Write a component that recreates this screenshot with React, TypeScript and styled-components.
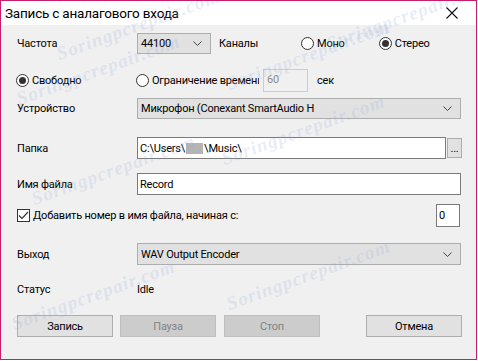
import React from 'react';
import styled, { createGlobalStyle } from 'styled-components';

const GlobalStyle = createGlobalStyle`
  html, body {
    margin: 0;
    padding: 0;
    background: #ffffff;
  }
  body {
    font-family: Roboto, "Liberation Sans", sans-serif;
    font-size: 11px;
    letter-spacing: -0.2px;
    color: #000;
  }
`

const Window = styled.div`
  position: relative;
  width: 477px;
  height: 360px;
  box-sizing: border-box;
  border: 1px solid #c81d6b;
  background: #f0f0f0;
  display: flex;
  flex-direction: column;
  overflow: hidden;
`

const TitleBar = styled.div`
  height: 24px;
  background: #ffffff;
  display: flex;
  align-items: center;
  justify-content: space-between;
  padding-left: 4px;
  font-size: 13.5px;
`

const CloseButton = styled.div`
  width: 30px;
  height: 24px;
  display: flex;
  align-items: center;
  justify-content: center;
  margin-right: 9px;
`

const Body = styled.div`
  padding: 8px 0 0 15px;
  display: flex;
  flex-direction: column;
`

const Row = styled.div<{ $top: number; $h: number }>`
  display: flex;
  align-items: center;
  margin-top: ${p => p.$top}px;
  height: ${p => p.$h}px;
`

const Label = styled.div<{ $w?: number; $ml?: number }>`
  width: ${p => (p.$w ? `${p.$w}px` : 'auto')};
  margin-left: ${p => p.$ml || 0}px;
  white-space: nowrap;
  overflow: hidden;
  flex-shrink: 0;
`

const Combo = styled.div<{ $w: number }>`
  width: ${p => p.$w}px;
  height: 100%;
  box-sizing: border-box;
  background: #e1e1e1;
  border: 1px solid #adadad;
  display: flex;
  align-items: center;
  justify-content: space-between;
  padding: 0 8px 0 3px;
  flex-shrink: 0;
`

const TextBox = styled.div<{ $w: number; $ml?: number; $disabled?: boolean }>`
  width: ${p => p.$w}px;
  margin-left: ${p => p.$ml || 0}px;
  height: 100%;
  box-sizing: border-box;
  background: ${p => (p.$disabled ? '#f0f0f0' : '#ffffff')};
  color: ${p => (p.$disabled ? '#8a8a8a' : '#000')};
  border: 1px solid ${p => (p.$disabled ? '#cccccc' : '#7a7a7a')};
  display: flex;
  align-items: ${p => (p.$disabled ? 'flex-start' : 'center')};
  padding: ${p => (p.$disabled ? '3px 3px 0' : '0 2px')};
  white-space: nowrap;
  overflow: hidden;
  flex-shrink: 0;
`

const Blur = styled.span`
  display: inline-block;
  width: 17px;
  height: 11px;
  margin: 0 1px;
  background: #b4b4b4;
  filter: blur(0.6px);
`

const BrowseButton = styled.div`
  width: 15px;
  height: 20px;
  box-sizing: border-box;
  margin-left: 1px;
  background: #e1e1e1;
  border: 1px solid #adadad;
  font-size: 11px;
  display: flex;
  align-items: flex-end;
  justify-content: center;
  padding-bottom: 3px;
  line-height: 1;
`

const Choice = styled.div<{ $ml?: number; $w?: number }>`
  display: flex;
  align-items: center;
  gap: 3px;
  margin-left: ${p => p.$ml || 0}px;
  width: ${p => (p.$w ? `${p.$w}px` : 'auto')};
  white-space: nowrap;
  overflow: hidden;
  flex-shrink: 0;
`

const RadioCircle = styled.span<{ $on?: boolean }>`
  width: 13px;
  height: 13px;
  box-sizing: border-box;
  border-radius: 50%;
  border: 1px solid #333333;
  background: #ffffff;
  display: flex;
  align-items: center;
  justify-content: center;
  flex-shrink: 0;
  &::after {
    content: '';
    display: ${p => (p.$on ? 'block' : 'none')};
    width: 7px;
    height: 7px;
    border-radius: 50%;
    background: #333333;
  }
`

const CheckBox = styled.span`
  width: 13px;
  height: 13px;
  box-sizing: border-box;
  border: 1px solid #333333;
  background: #ffffff;
  display: flex;
  align-items: center;
  justify-content: center;
  flex-shrink: 0;
`

const ButtonRow = styled.div`
  display: flex;
  margin-top: 19px;
  height: 22px;
`

const Button = styled.div<{ $disabled?: boolean; $ml?: number }>`
  width: 96px;
  height: 100%;
  box-sizing: border-box;
  margin-left: ${p => p.$ml || 0}px;
  background: ${p => (p.$disabled ? '#cccccc' : '#e1e1e1')};
  border: 1px solid ${p => (p.$disabled ? '#bfbfbf' : '#adadad')};
  color: ${p => (p.$disabled ? '#838383' : '#000')};
  display: flex;
  align-items: center;
  justify-content: center;
`

const Watermarks = styled.div`
  position: absolute;
  inset: 0;
  pointer-events: none;
`

const Mark = styled.div`
  position: absolute;
  font-family: "Liberation Serif", serif;
  font-style: italic;
  font-weight: bold;
  font-size: 19px;
  letter-spacing: 1px;
  color: rgba(150, 172, 222, 0.22);
  transform: rotate(-20deg);
  transform-origin: left bottom;
  white-space: nowrap;
`

const Chevron = () => (
  <svg width="9" height="5" viewBox="0 0 9 5">
    <polyline points="0.5,0.5 4.5,4.5 8.5,0.5" fill="none" stroke="#444" strokeWidth="1" />
  </svg>
)

const marks = [
  { x: 60, y: 70 },
  { x: 330, y: 60 },
  { x: 20, y: 115 },
  { x: 230, y: 100 },
  { x: 35, y: 215 },
  { x: 225, y: 175 },
  { x: 15, y: 340 },
  { x: 230, y: 320 },
]

function App() {
  return (
    <>
      <GlobalStyle />
      <Window>
        <TitleBar>
          <span>Запись с аналагового входа</span>
          <CloseButton>
            <svg width="12" height="12" viewBox="0 0 12 12">
              <path d="M0.5 0.5 L11.5 11.5 M11.5 0.5 L0.5 11.5" stroke="#111" strokeWidth="1.1" />
            </svg>
          </CloseButton>
        </TitleBar>
        <Body>
          <Row $top={0} $h={21}>
            <Label $w={120} $ml={1}>Частота</Label>
            <Combo $w={74}>
              <span>44100</span>
              <Chevron />
            </Combo>
            <Label $w={82} $ml={8}>Каналы</Label>
            <Choice>
              <RadioCircle />
              <span>Моно</span>
            </Choice>
            <Choice $ml={34}>
              <RadioCircle $on />
              <span>Стерео</span>
            </Choice>
          </Row>

          <Row $top={15} $h={23}>
            <Choice $w={120}>
              <RadioCircle $on />
              <span>Свободно</span>
            </Choice>
            <Choice $w={123}>
              <RadioCircle />
              <span>Ограничение времени</span>
            </Choice>
            <TextBox $w={45} $ml={4} $disabled>60</TextBox>
            <Label $ml={9}>сек</Label>
          </Row>

          <Row $top={6} $h={21}>
            <Label $w={120} $ml={1}>Устройство</Label>
            <Combo $w={324}>
              <span>Микрофон (Conexant SmartAudio H</span>
              <Chevron />
            </Combo>
          </Row>

          <Row $top={18} $h={22}>
            <Label $w={120} $ml={1}>Папка</Label>
            <TextBox $w={309}>
              C:\Users\<Blur />\Music\
            </TextBox>
            <BrowseButton>...</BrowseButton>
          </Row>

          <Row $top={14} $h={22}>
            <Label $w={120} $ml={1}>Имя файла</Label>
            <TextBox $w={324}>Record</TextBox>
          </Row>

          <Row $top={9} $h={23}>
            <Choice $w={420} $ml={1}>
              <CheckBox>
                <svg width="11" height="9" viewBox="0 0 11 9">
                  <polyline points="1,4.5 4,7.5 10,1" fill="none" stroke="#333" strokeWidth="1.2" />
                </svg>
              </CheckBox>
              <span>Добавить номер в имя файла, начиная с:</span>
            </Choice>
            <TextBox $w={24} $ml={-1}>0</TextBox>
          </Row>

          <Row $top={16} $h={22}>
            <Label $w={120} $ml={1}>Выход</Label>
            <Combo $w={324}>
              <span>WAV Output Encoder</span>
              <Chevron />
            </Combo>
          </Row>

          <Row $top={17} $h={14}>
            <Label $w={120} $ml={1}>Статус</Label>
            <Label>Idle</Label>
          </Row>

          <ButtonRow>
            <Button $ml={1}>Запись</Button>
            <Button $ml={7} $disabled>Пауза</Button>
            <Button $ml={8} $disabled>Стоп</Button>
            <Button $ml={46}>Отмена</Button>
          </ButtonRow>
        </Body>
        <Watermarks>
          {marks.map(m => (
            <Mark key={`${m.x}-${m.y}`} style={{ left: m.x, top: m.y - 28 }}>
              Soringpcrepair.com
            </Mark>
          ))}
        </Watermarks>
      </Window>
    </>
  );
}

export default App;
